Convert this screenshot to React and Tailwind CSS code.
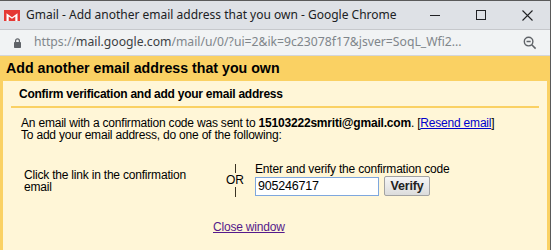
import { useState } from 'react';

export default function App() {
    const [code, setCode] = useState('905246717');

    return (
        <div className="w-[551px] h-[250px] overflow-hidden flex flex-col border-t border-r border-[#5a5a5a] bg-[#fff6d7]" style={{ fontFamily: 'Arial, "Liberation Sans", sans-serif' }}>
            {/* title bar */}
            <div className="h-[28px] shrink-0 flex items-center bg-[#dee1e6] text-[12px] text-[#202124]" style={{ fontFamily: '"Noto Sans", "Open Sans", sans-serif' }}>
                <div className="pl-[4px] pr-[6px] pt-[1px] flex items-center">
                    <svg width="16" height="11" viewBox="0 0 16 11">
                        <rect width="16" height="11" fill="#e53935" />
                        <path d="M2.5 11V3.2L8 7.2l5.5-4V11h-2.2V6.4L8 8.8 4.7 6.4V11z" fill="#fff" />
                    </svg>
                </div>
                <span className="flex-1 whitespace-nowrap">Gmail - Add another email address that you own - Google Chrome</span>
                <div className="flex items-center h-full">
                    <div className="w-[46px] h-full flex items-center justify-center">
                        <div className="w-[10px] h-px bg-[#202124]" />
                    </div>
                    <div className="w-[46px] h-full flex items-center justify-center">
                        <div className="w-[10px] h-[10px] border border-[#202124]" />
                    </div>
                    <div className="w-[46px] h-full flex items-center justify-center">
                        <svg width="11" height="11" viewBox="0 0 11 11">
                            <path d="M0.5 0.5l10 10M10.5 0.5l-10 10" stroke="#202124" strokeWidth="1.1" />
                        </svg>
                    </div>
                </div>
            </div>

            {/* address bar */}
            <div className="h-[27px] shrink-0 flex items-center bg-[#f1f3f4] border-t border-[#c6c8cc] border-b border-b-[#d4d6d9]">
                <div className="pl-[14px] pr-[13px] flex items-center">
                    <svg width="7" height="10" viewBox="0 0 7 10">
                        <path d="M1.6 4V2.8a1.9 1.9 0 0 1 3.8 0V4" fill="none" stroke="#5f6368" strokeWidth="1.2" />
                        <rect x="0" y="4" width="7" height="6" rx="0.7" fill="#5f6368" />
                    </svg>
                </div>
                <div className="flex-1 whitespace-nowrap overflow-hidden text-[12.2px] text-[#80868b]" style={{ fontFamily: '"Noto Sans", "Open Sans", sans-serif' }}>
                    https://<span className="text-[#3c4043]">mail.google.com</span>/mail/u/0/?ui=2&amp;ik=9c23078f17&amp;jsver=SoqL_Wfi2...
                </div>
                <div className="w-[40px] flex items-center justify-center">
                    <svg width="14" height="14" viewBox="0 0 15 15">
                        <circle cx="6" cy="6" r="4.6" fill="none" stroke="#5f6368" strokeWidth="1.5" />
                        <path d="M3.8 6h4.4M9.4 9.4L13.5 13.5" stroke="#5f6368" strokeWidth="1.6" />
                    </svg>
                </div>
            </div>

            {/* page */}
            <div className="flex-1 flex flex-col bg-[#fad163] px-[3px]">
                <h1 className="h-[25px] shrink-0 flex items-center pl-[3px] pt-[1px] text-[14.2px] font-bold text-black">
                    Add another email address that you own
                </h1>
                <div className="flex-1 bg-[#fff6d7] text-[12px] tracking-[-0.2px] text-black">
                    <div className="mx-[8px] border-b-2 border-[#fad163] h-[27px] flex items-center pl-[8px] font-bold tracking-[-0.25px]">
                        Confirm verification and add your email address
                    </div>
                    <div className="pl-[18px] pt-[9px] leading-[12px]">
                        <p>
                            An email with a confirmation code was sent to <b>15103222smriti@gmail.com</b>. [<a href="#" className="text-[#0000cc] underline">Resend email</a>]
                        </p>
                        <p>To add your email address, do one of the following:</p>
                    </div>
                    <div className="flex items-start pt-[23px]">
                        <div className="w-[217px] pl-[21px] mt-[5px] leading-[12px]">
                            <div className="w-[170px]">Click the link in the confirmation email</div>
                        </div>
                        <div className="w-[30px] flex flex-col items-center">
                            <div className="w-px h-[9px] bg-[#3a3222]" />
                            <span className="leading-[14px] tracking-normal">OR</span>
                            <div className="w-px h-[10px] bg-[#3a3222]" />
                        </div>
                        <div className="pl-[5px] -mt-[1px]">
                            <div className="leading-[12px]">Enter and verify the confirmation code</div>
                            <div className="flex items-center gap-[5px] mt-[1px]">
                                <input
                                    value={code}
                                    onChange={(e) => setCode(e.target.value)}
                                    className="w-[124px] h-[19px] px-[2px] text-[12.5px] bg-white border border-[#7ea7de] outline-none"
                                    style={{ fontFamily: 'Arial, "Liberation Sans", sans-serif' }}
                                />
                                <button className="h-[20px] w-[46px] font-bold text-[12.5px] border border-[#a3a3a3] rounded-[2px] bg-gradient-to-b from-[#f6f6f6] to-[#dcdcdc] text-[#222]">
                                    Verify
                                </button>
                            </div>
                        </div>
                    </div>
                    <div className="pt-[24px] pl-[210px] leading-[12px]">
                        <a href="#" className="text-[#551a8b] underline">Close window</a>
                    </div>
                </div>
            </div>
        </div>
    );
}
